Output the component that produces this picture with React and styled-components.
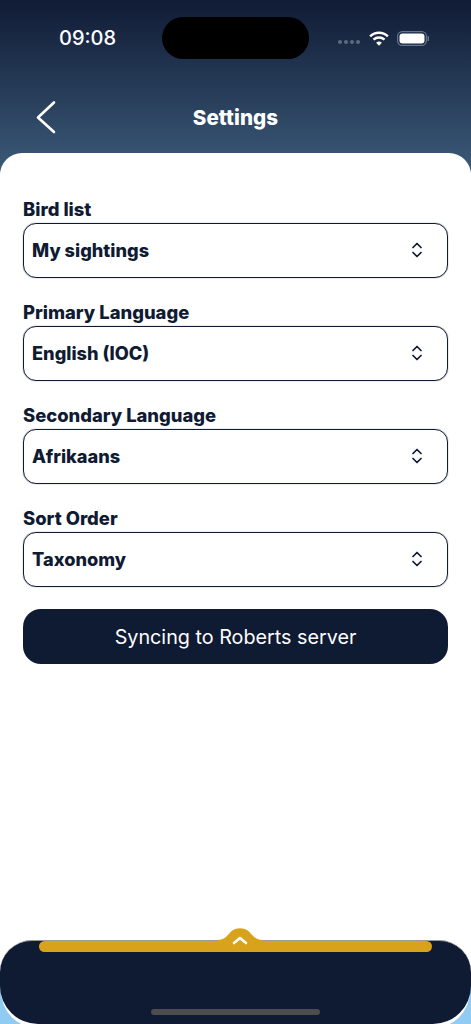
import React from 'react';
import styled, { createGlobalStyle } from 'styled-components';

// ----- style -----

const NAVY = '#0f1a33';
const FONT = `Inter, "Noto Sans", "Liberation Sans", sans-serif`;

const GlobalStyle = createGlobalStyle`
    html, body {
        margin: 0;
        padding: 0;
        background: #8fcbf2;
    }
    * {
        box-sizing: border-box;
    }
`
const Screen = styled.div`
    width: 471px;
    height: 1024px;
    display: flex;
    flex-direction: column;
    overflow: hidden;
    font-family: ${FONT};
    color: ${NAVY};
    background: linear-gradient(180deg, #101b35 0, #3b5a78 172px, #8fcbf2 172px);
`
const Header = styled.header`
    height: 153px;
    flex-shrink: 0;
    display: flex;
    flex-direction: column;
    color: #fff;
`
const StatusBar = styled.div`
    height: 76px;
    padding: 17px 0 0 59px;
    display: flex;
    align-items: flex-start;
`
const Time = styled.span`
    width: 103px;
    height: 42px;
    line-height: 42px;
    font-size: 20px;
    font-weight: 500;
`
const Island = styled.div`
    width: 147px;
    height: 42px;
    border-radius: 21px;
    background: #000;
`
const StatusIcons = styled.div`
    height: 42px;
    margin-left: 29px;
    display: flex;
    align-items: center;
`
const Dots = styled.div`
    display: flex;
    gap: 2px;
    margin: 8px 9px 0 0;
`
const Dot = styled.i`
    width: 4px;
    height: 4px;
    border-radius: 50%;
    background: #5d6c80;
`
const NavBar = styled.nav`
    position: relative;
    height: 77px;
    padding-top: 5px;
    display: flex;
    align-items: center;
    justify-content: center;
`
const BackButton = styled.button`
    position: absolute;
    left: 34px;
    top: 23px;
    width: 24px;
    height: 36px;
    padding: 0;
    border: 0;
    background: none;
    display: block;
`
const Title = styled.h1`
    margin: 0;
    font-size: 20.6px;
    font-weight: 800;
    letter-spacing: 0.1px;
`
const Content = styled.main`
    flex: 1;
    padding: 46px 23px 0;
    display: flex;
    flex-direction: column;
    gap: 24px;
    background: #fff;
    border-radius: 22px 22px 0 0;
`
const Field = styled.div`
    display: flex;
    flex-direction: column;
    gap: 1px;
`
const Label = styled.label`
    height: 23px;
    line-height: 20px;
    font-size: 18.4px;
    font-weight: 800;
`
const Select = styled.div`
    height: 55px;
    padding: 0 25px 2px 8px;
    display: flex;
    align-items: center;
    justify-content: space-between;
    border: 1px solid ${NAVY};
    box-shadow: 0 0 1px rgba(15, 26, 51, 0.8);
    border-radius: 13px;
    font-size: 18.2px;
    font-weight: 800;
`
const SyncButton = styled.button`
    height: 55px;
    margin-top: -2px;
    border: 0;
    border-radius: 18px;
    background: ${NAVY};
    color: #fff;
    font-family: ${FONT};
    font-size: 19.75px;
    font-weight: 400;
`
const FooterArea = styled.div`
    flex-shrink: 0;
    background: linear-gradient(180deg, #fff 50%, #8fcbf2 50%);
`
const Footer = styled.footer`
    position: relative;
    height: 84px;
    background: ${NAVY};
    border-top: 1px solid #9a9a96;
    border-radius: 32px 32px 38px 38px;
    box-shadow: 0 5px 0 -1px #fff;
`
const Drawer = styled.div`
    height: 11px;
    margin: 0 39px;
    background: #d9a21b;
    border-radius: 6px;
`
const DrawerTab = styled.svg`
    position: absolute;
    left: 218px;
    top: -15px;
`
const HomeIndicator = styled.div`
    position: absolute;
    left: 151px;
    bottom: 9px;
    width: 169px;
    height: 6px;
    border-radius: 3px;
    background: #4d4d4f;
`

// ----- icons -----

const Wifi = () => (
    <svg width="20" height="15" viewBox="0 0 21 15" fill="none" stroke="#fff" strokeWidth="2.6">
        <path d="M1.2 5.2a13.6 13.6 0 0 1 18.6 0" />
        <path d="M4.7 8.7a8.6 8.6 0 0 1 11.6 0" />
        <path d="M10.5 15l-3-3a4.3 4.3 0 0 1 6 0z" fill="#fff" stroke="none" />
    </svg>
)

const Battery = () => (
    <svg width="32" height="15" viewBox="0 0 32 15" style={{ marginLeft: 8 }}>
        <rect x="0.6" y="0.6" width="28.800" height="13.800" rx="4.600" fill="none" stroke="#66758b" strokeWidth="1.2" />
        <rect x="2.500" y="2.500" width="25" height="10" rx="3" fill="#fff" />
        <path d="M30.500 5a2.500 2.500 0 0 1 0 5z" fill="#66758b" />
    </svg>
)

const Updown = () => (
    <svg width="10" height="16" viewBox="0 0 10 16" fill="none" stroke={NAVY} strokeWidth="1.7" strokeLinecap="round" strokeLinejoin="round">
        <path d="M1 5.500L5 1.500 9 5.500" />
        <path d="M1 10.500L5 14.500 9 10.500" />
    </svg>
)

const fields = [
    { label: 'Bird list', value: 'My sightings' },
    { label: 'Primary Language', value: 'English (IOC)' },
    { label: 'Secondary Language', value: 'Afrikaans' },
    { label: 'Sort Order', value: 'Taxonomy' },
]

// ----- component -----

const App = () => (
    <Screen>
        <GlobalStyle />
        <Header>
            <StatusBar>
                <Time>09:08</Time>
                <Island />
                <StatusIcons>
                    <Dots><Dot /><Dot /><Dot /><Dot /></Dots>
                    <Wifi />
                    <Battery />
                </StatusIcons>
            </StatusBar>
            <NavBar>
                <BackButton aria-label="Back">
                    <svg width="24" height="36" viewBox="0 0 24 36" fill="none" stroke="#fff" strokeWidth="2.6" strokeLinecap="round" strokeLinejoin="round">
                        <path d="M20 3.500L4 18.500 20 33" />
                    </svg>
                </BackButton>
                <Title>Settings</Title>
            </NavBar>
        </Header>
        <Content>
            {fields.map(field => (
                <Field key={field.label}>
                    <Label>{field.label}</Label>
                    <Select>
                        {field.value}
                        <Updown />
                    </Select>
                </Field>
            ))}
            <SyncButton>Syncing to Roberts server</SyncButton>
        </Content>
        <FooterArea>
            <Footer>
                <Drawer />
                <DrawerTab width="44" height="24" viewBox="0 0 44 24">
                    <path d="M0 14C6 14 9 10 13 5.500C17.500 1 26.500 1 31 5.500C35 10 38 14 44 14V24H0z" fill="#d9a21b" />
                    <path d="M16 17L22 12L28 17" fill="none" stroke="#fff" strokeWidth="2.600" strokeLinecap="round" strokeLinejoin="round" />
                </DrawerTab>
                <HomeIndicator />
            </Footer>
        </FooterArea>
    </Screen>
)

export default App;
